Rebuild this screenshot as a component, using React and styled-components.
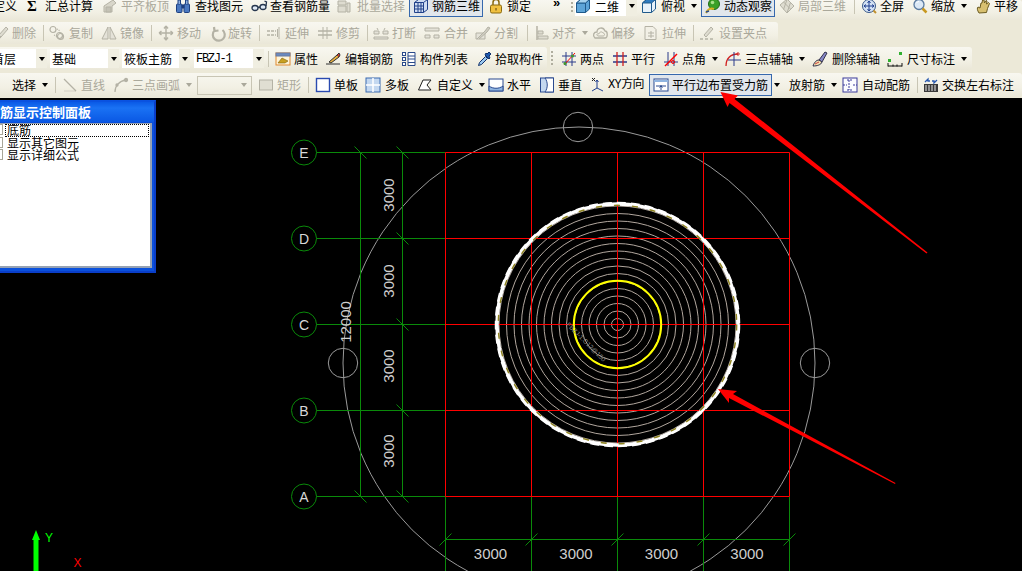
import React from 'react'
import styled, { createGlobalStyle } from 'styled-components'

const UI_FONT = '"Noto Sans CJK SC", "Liberation Sans", sans-serif'
const GREY = '#b4b2a5'
const GREEN = '#0a8a0a'
const RED = '#ff0000'

const shapes = {
  tile: <g stroke={GREY} fill="#d8d6ca"><path d="M2 14V8l9-6 3 3-4 3v6z" /><path d="M4 9h5v5H4z" fill="#c4c2b6" /></g>,
  bino: <g stroke="#1d3f80" fill="#4a78c0"><rect x="1.5" y="6" width="5.5" height="8.5" rx="1" /><rect x="9" y="6" width="5.5" height="8.5" rx="1" /><path d="M3 6V2h2.5v4M10.5 6V2H13v4" fill="#8fb0e0" /><path d="M7 7h2v3H7z" fill="#1d3f80" /></g>,
  glasses: <g stroke="#26364e" fill="#dfe9f5" strokeWidth="1.3"><ellipse cx="4" cy="10" rx="3" ry="2.5" /><ellipse cx="12" cy="9" rx="3" ry="2.5" /><path d="M7 9.5l2-.5M15 8l.5-4-2-1" fill="none" /></g>,
  batch: <g stroke={GREY} fill="#dedcd0"><path d="M2 3h8v4H2zM2 8h8v6H2z" /><path d="M11 5h3v9h-3z" /></g>,
  rebar3d: <g stroke="#20408a" fill="none"><path d="M1.5 4.5l4-3h9v10l-4 3h-9z" fill="#cfdcf2" /><path d="M1.5 4.5h9v10M10.5 4.5l4-3M5 5v9.5M8 5v9.5M1.5 8h9M1.5 11h9" /></g>,
  lock: <g stroke="#8a6a10"><path d="M5 7V4.5a3 3 0 016 0V7" fill="none" strokeWidth="1.5" /><rect x="2.5" y="7" width="11" height="8" rx="1.5" fill="#f0c040" /><path d="M8 10v2.5" stroke="#5a4008" /></g>,
  cube: <g stroke="#1f5a8c"><path d="M1.5 5l4-3.5h9V11l-4 3.5h-9z" fill="#5da4d8" /><path d="M1.5 5h9v9.5M10.5 5l4-3.5" fill="none" /><path d="M1.5 5l4-3.5h9l-4 3.5z" fill="#a6d2ee" /></g>,
  cubeTop: <g stroke="#1f5a8c"><path d="M1.5 5l4-3.5h9V11l-4 3.5h-9z" fill="#e8f2fa" /><path d="M1.5 5l4-3.5h9l-4 3.5z" fill="#2f7cc0" /><path d="M10.5 5v9.5" fill="none" /></g>,
  orbit: <g><circle cx="9" cy="6" r="5.5" fill="#3aa028" stroke="#1f6a18" /><circle cx="7.5" cy="4.5" r="1.8" fill="#a6e088" /><path d="M1 15c2-4 5-5 8-4" stroke="#d8b020" strokeWidth="2" fill="none" /><path d="M1 14l3-1" stroke="#2a4a90" strokeWidth="1.5" /></g>,
  tile3d: <g stroke={GREY} fill="#dedcd0"><path d="M1 7l7-6 7 7-7 7z" /><path d="M4.5 4l7 7M8 1.5l-3.5 10M11.5 4.5L8 15" fill="none" /></g>,
  full: <g><circle cx="8" cy="8" r="6.5" fill="#d4e2f4" stroke="#3a5a8a" /><path d="M8 3v10M3 8h10M8 3L6.5 5M8 3l1.5 2M8 13l-1.5-2M8 13l1.5-2M3 8l2-1.5M3 8l2 1.5M13 8l-2-1.5M13 8l-2 1.5" stroke="#1f3f90" fill="none" /><path d="M12.5 12.5l2.5 2.5" stroke="#c09030" strokeWidth="2" /></g>,
  zoom: <g><circle cx="7" cy="6.5" r="5" fill="#dbe8f6" stroke="#5a7aa0" strokeWidth="1.3" /><path d="M4.5 5A3 3 0 017 3.5" stroke="#fff" fill="none" /><path d="M10.5 10.5l4 4" stroke="#c89820" strokeWidth="2.5" /></g>,
  hand: <g stroke="#6a5a20" fill="#d8c070"><path d="M3 15c-2-3-2-5-1-6l2 1 1-5h1l.5-3H8l.5 3L10 2.5l1 .5-.5 3 2-1.5 1 1-2 5-1 4z" /></g>,
  del: <g stroke={GREY} fill="#dedcd0"><path d="M6 10l7-8 2 2-7 8z" /><path d="M1 15c1-3 3-5 5-5l2 2c-1 2-4 3-7 3z" fill="#c8c6ba" /></g>,
  copy: <g stroke={GREY} fill="none" strokeWidth="1.2"><circle cx="4" cy="4.5" r="3" /><circle cx="11.5" cy="11.5" r="3" /><circle cx="10.5" cy="10.5" r="3" /><path d="M8 4l3 2M5 10l2 1" strokeDasharray="1 1" /></g>,
  mirror: <g stroke={GREY} fill="#e4e2d8"><path d="M7 2v12H1zM9 2v12h6z" /></g>,
  move: <g stroke={GREY} fill="none" strokeWidth="1.4"><path d="M8 1v14M1 8h14M8 1L6 3.5M8 1l2 2.5M8 15l-2-2.5M8 15l2-2.5M1 8l2.5-2M1 8l2.5 2M15 8l-2.5-2M15 8l-2.5 2" /></g>,
  rotate: <path d="M12.5 5a6 6 0 11-8 .5M4 2l.5 4 4-.5" stroke={GREY} strokeWidth="2.2" fill="none" />,
  extend: <g stroke={GREY} fill="none"><path d="M1 6h9M1 10h9" strokeWidth="1.5" strokeDasharray="3 1" /><path d="M13 2v12M11.5 4v8" /></g>,
  trim: <g stroke={GREY} fill="none"><path d="M1 6h14M1 10h14" strokeWidth="1.3" /><path d="M6 2v12M10 2v12" /></g>,
  breakIt: <g stroke={GREY} fill="#e4e2d8"><path d="M1 6h5v3H1zM10 6h5v3h-5z" /><path d="M4 3l1 2M12 3l-1 2M1 12h14v2H1z" /></g>,
  merge: <g stroke={GREY} fill="#e4e2d8"><path d="M1 3h14v3H1zM1 10h5v3H1zM10 10h5v3h-5z" /></g>,
  split: <g stroke={GREY} fill="#e4e2d8"><path d="M1 8h9v6H1z" /><path d="M2 14l8-8 3-4 2 1-3 4-8 7" fill="#d0cec2" /></g>,
  align: <g stroke={GREY} fill="#dedcd0"><path d="M3 1v14" strokeWidth="1.5" /><path d="M4 6h5v3H4zM4 11h10v3H4z" /></g>,
  offset: <g stroke={GREY} fill="none"><path d="M3 13c-3-3-1-6 2-6 0-4 6-6 8-1 3 0 3 7 0 7z" strokeWidth="1.3" /><path d="M6 11c-2-1-1-3 1-2 0-2 3-3 4-1 2 0 2 3 0 3z" /></g>,
  stretch: <g stroke={GREY} fill="#f2f0e6"><path d="M2 1.5h8l3 3v10H2z" /><path d="M5 8h6M5 11h6M8 6v7" fill="none" /></g>,
  grip: <g fill="none" stroke={GREY}><path d="M5 10l7-8 2 2-7 8z" fill="#dedcd0" /><path d="M1 14h3M6 14h3M11 14h3" strokeWidth="1.5" /></g>,
  attr: <g><rect x="1" y="2" width="14" height="12" fill="#fff4d8" stroke="#e08a30" /><rect x="1" y="2" width="14" height="3" fill="#6a8ac0" stroke="#6a7aa0" /><path d="M3 12l4-5 6 3-3 2z" fill="#c8a020" stroke="#806010" strokeWidth=".6" /></g>,
  pencil: <g stroke="#303030" fill="none"><path d="M1 13h14" /><path d="M4 11l8-7 2 2-8 6z" fill="#e8b040" /><path d="M12 4l2-2 1 2-1 2" fill="#d84030" /></g>,
  list: <g stroke="#2a4a8a" fill="#fff"><rect x="1.5" y="1.5" width="3" height="3" /><rect x="1.5" y="6.5" width="3" height="3" /><rect x="1.5" y="11.5" width="3" height="3" /><path d="M7 1.5h7v13H7zM7 5h7M7 8h7M7 11.5h7" /></g>,
  dropper: <g stroke="#10306a"><path d="M1.5 14.5l1-3 6-6 2 2-6 6z" fill="#9ac8f0" /><path d="M8 4l4 4 1-1-1-2 2-2-2-2-2 2-1-1z" fill="#1f5ab0" /></g>,
  twoPoint: <g fill="none"><path d="M1 5h14M1 11h14M5 1v14M11 1v14" stroke="#2a3a8a" /><path d="M3 14L14 2" stroke={RED} /><circle cx="4" cy="12.5" r="1.5" fill="#3a9a30" /><circle cx="11.5" cy="5" r="1.5" fill="#3a9a30" /></g>,
  parallel: <g fill="none"><path d="M1 5h14M1 11h14" stroke="#2a3a8a" strokeWidth="1.3" /><path d="M5 1v14M11 1v14" stroke="#d02020" strokeWidth="1.3" /></g>,
  angle: <g fill="none"><path d="M1 11h14M5 1v14" stroke="#2a3a8a" /><path d="M11 1v14" stroke="#2a3a8a" /><path d="M2 15L14 3" stroke={RED} strokeWidth="1.4" /><circle cx="10" cy="11" r="1.5" stroke={RED} /></g>,
  arc3: <g fill="none"><path d="M1 15C1 7 6 3 13 3" stroke="#d02020" strokeWidth="1.3" /><path d="M9 1v14M3 9h13" stroke="#2a3a8a" /><circle cx="13" cy="3" r="1.2" stroke="#d02020" /></g>,
  brush: <g stroke="#30304a"><path d="M7 9l6-8 2 1-5 9z" fill="#8888c8" /><path d="M1 15c1-3 3-6 6-6l3 2c-1 3-5 4-9 4z" fill="#f0e0b0" /><path d="M3 13l4-2" stroke="#d04040" /></g>,
  dim: <g fill="none" stroke="#101010"><path d="M1 15h14M1 12v3.5M15 12v3.500M6 13.5v2M10 13.5v2" /><rect x="1" y="8" width="3" height="3" fill="#30b030" stroke="none" /><rect x="12" y="1" width="3" height="3" fill="#30b030" stroke="none" /></g>,
  pick: <g stroke="#3a5a9a" fill="#a0b8e0"><path d="M-6 8h9l-1 6h-7z" /></g>,
  line: <g stroke={GREY} strokeWidth="1.3" fill="none"><path d="M2 2l12 12" /><path d="M2 14h12" strokeWidth=".5" /></g>,
  arc: <g stroke={GREY} strokeWidth="1.3" fill="none"><path d="M2 15c0-6 4-11 11-12" /><circle cx="13" cy="3" r="1.5" fill={GREY} /><circle cx="4" cy="8" r="1" fill={GREY} /></g>,
  rect: <rect x="1.5" y="3" width="13" height="10" fill="#e0ded2" stroke={GREY} />,
  single: <rect x="1.5" y="1.5" width="13" height="13" fill="#fff" stroke="#2a4ab0" strokeWidth="1.4" />,
  multi: <g fill="#c4d8f0" stroke="#3a6ab0"><rect x="1" y="1" width="14" height="14" /><path d="M8 1v14M1 8h14" stroke="#fff" strokeWidth="1.5" /></g>,
  custom: <path d="M1.5 13L6 3h8l-4 5 4 5z" fill="#fff" stroke="#202020" />,
  horiz: <g stroke="#2a4a90"><rect x="1" y="2" width="14" height="12" fill="#fff" /><path d="M1 9c4 3 10 3 14 0v5H1z" fill="#8fb4e0" /></g>,
  vert: <g stroke="#2a4a90"><rect x="1.5" y="1" width="13" height="14" fill="#c4d8f0" /><path d="M6 1c3 4 3 10 0 14h8.500V1z" fill="#fff" /></g>,
  xy: <g fill="none" stroke="#1f3f90"><path d="M7 3v8l6 3M7 11l-5 3M7 3L5.5 5M7 3l1.500 2" /><path d="M2 1l3 3M5 1L2 4" stroke="#202020" /></g>,
  edge: <g stroke="#2a4a90"><rect x="1" y="2" width="14" height="12" fill="#fff" /><path d="M1 4h14" stroke="#8fb4e0" strokeWidth="2" /><path d="M3 9h10M8 8v5M6.5 10.5L8 9l1.5 1.5" fill="none" /></g>,
  auto: <g fill="none"><rect x="1" y="1" width="14" height="14" stroke="#3a3a9a" fill="#fbfbff" /><path d="M5 3h6M5 13h6M7 3v10M1 8h4M11 8h4" stroke="#3a3a9a" strokeDasharray="2 1" /></g>,
  swap: <g><rect x="1" y="7" width="14" height="8" fill="#3a3a3a" /><path d="M3 8v6M6 8v6M9 8v6M12 8v6" stroke="#e8e8e8" /><path d="M2 5l3-3v2h2M14 3l-3 3V4H9" stroke="#2a5ab0" fill="none" strokeWidth="1.3" /></g>
}

const Glyph = ({ name }) => (
  <GlyphBox viewBox="0 0 16 16">{shapes[name]}</GlyphBox>
)

const row1 = [
  { t: '定义', w: 34 },
  { sigma: true, t: '汇总计算', w: 75 },
  { i: 'tile', t: '平齐板顶', w: 73, off: true },
  { i: 'bino', t: '查找图元', w: 76, g: 4 },
  { i: 'glasses', t: '查看钢筋量', w: 85 },
  { i: 'batch', t: '批量选择', w: 73, off: true, g: 5 },
  { i: 'rebar3d', t: '钢筋三维', w: 74, press: true },
  { i: 'lock', t: '锁定', w: 65, ml: 5 },
  { more: true, w: 17 },
  { grip: true, w: 5 },
  { combo: true, i: 'cube', t: '二维', w: 62 },
  { i: 'cubeTop', t: '俯视', w: 60, drop: true, ml: 4, g: 4 },
  { i: 'orbit', t: '动态观察', w: 74, press: true },
  { i: 'tile3d', t: '局部三维', w: 75, ml: 4, off: true },
  { sep: true, w: 7 },
  { i: 'full', t: '全屏', w: 51 },
  { i: 'zoom', t: '缩放', w: 64, drop: true },
  { i: 'hand', t: '平移', w: 46, g: 2 }
]

const row2 = [
  { i: 'del', t: '删除', w: 50 },
  { sep: true, w: 6 },
  { i: 'copy', t: '复制', w: 52, g: 4 },
  { i: 'mirror', t: '镜像', w: 50, g: 3 },
  { sep: true, w: 7 },
  { i: 'move', t: '移动', w: 52 },
  { i: 'rotate', t: '旋转', w: 49, g: 2 },
  { sep: true, w: 7 },
  { i: 'extend', t: '延伸', w: 51 },
  { i: 'trim', t: '修剪', w: 50 },
  { sep: true, w: 6 },
  { i: 'breakIt', t: '打断', w: 51 },
  { i: 'merge', t: '合并', w: 51, g: 4 },
  { i: 'split', t: '分割', w: 52 },
  { sep: true, w: 7 },
  { i: 'align', t: '对齐', w: 58, g: 2, drop: true },
  { i: 'offset', t: '偏移', w: 51 },
  { i: 'stretch', t: '拉伸', w: 50 },
  { sep: true, w: 6 },
  { i: 'grip', t: '设置夹点', w: 73, g: 4 }
]

const row3a = [
  { combo: true, t: '首层', w: 57 },
  { combo: true, t: '基础', w: 69, ml: 3 },
  { combo: true, t: '筱板主筋', w: 68, ml: 3 },
  { combo: true, t: 'FBZJ-1', w: 70, ml: 4, mono: true },
  { sep: true, w: 7, ml: 4 },
  { i: 'attr', t: '属性', w: 50 },
  { i: 'pencil', t: '编辑钢筋', w: 76, g: 4 },
  { i: 'list', t: '构件列表', w: 76, g: 3 },
  { i: 'dropper', t: '拾取构件', w: 70, g: 2 }
]

const row3b = [
  { grip: true, w: 11 },
  { i: 'twoPoint', t: '两点', w: 51 },
  { i: 'parallel', t: '平行', w: 51 },
  { i: 'angle', t: '点角', w: 62, drop: true },
  { i: 'arc3', t: '三点辅轴', w: 87, g: 4, drop: true },
  { i: 'brush', t: '删除辅轴', w: 75, g: 4 },
  { i: 'dim', t: '尺寸标注', w: 85, g: 4, drop: true }
]

const row4 = [
  { i: 'pick', t: '选择', w: 62, drop: true },
  { sep: true, w: 7 },
  { i: 'line', t: '直线', w: 51, off: true },
  { i: 'arc', t: '三点画弧', w: 84, off: true, drop: true },
  { blank: true, w: 55 },
  { i: 'rect', t: '矩形', w: 50, off: true, ml: 6 },
  { sep: true, w: 7 },
  { i: 'single', t: '单板', w: 50 },
  { i: 'multi', t: '多板', w: 52, g: 4 },
  { i: 'custom', t: '自定义', w: 71, g: 4, drop: true },
  { i: 'horiz', t: '水平', w: 51 },
  { i: 'vert', t: '垂直', w: 51 },
  { i: 'xy', t: 'XY方向', w: 59, g: 2, mono: true },
  { i: 'edge', t: '平行边布置受力筋', w: 123, press: true },
  { arrowOnly: true, w: 17 },
  { t: '放射筋', w: 53, drop: true },
  { i: 'auto', t: '自动配筋', w: 75, g: 4 },
  { sep: true, w: 6 },
  { i: 'swap', t: '交换左右标注', w: 95, g: 3 }
]

const renderTool = (tool, key) => {
  if (tool.sep) return <Sep key={key} $w={tool.w} $ml={tool.ml} />
  if (tool.grip) return <Grip key={key} $w={tool.w} />
  if (tool.more) return <More key={key} $w={tool.w}>»</More>
  if (tool.arrowOnly) return <Tool key={key} $w={tool.w}><Drop $off={false} $ml={2} /></Tool>
  if (tool.blank) return <BlankCombo key={key} $w={tool.w}><Drop $off $ml={0} /></BlankCombo>
  if (tool.combo) {
    return (
      <Combo key={key} $w={tool.w} $ml={tool.ml}>
        {tool.i && <Glyph name={tool.i} />}
        <ComboText $mono={tool.mono} $icon={!!tool.i}>{tool.t}</ComboText>
        <ComboBtn><Drop $off={false} $ml={0} /></ComboBtn>
      </Combo>
    )
  }
  return (
    <Tool key={key} $w={tool.w} $ml={tool.ml} $press={tool.press}>
      {tool.sigma && <Sigma>Σ</Sigma>}
      {tool.i && <Glyph name={tool.i} />}
      <Label $off={tool.off} $g={tool.i ? tool.g ?? 3 : 0} $mono={tool.mono}>{tool.t}</Label>
      {tool.drop && <Drop $off={tool.off} $ml={6} />}
    </Tool>
  )
}

const disabled = (list) => list.map((tool) => ({ ...tool, off: true }))

const ticksV = [[360.5, 152.5], [402.5, 152.5], [402.5, 238.5], [402.5, 324.5], [402.5, 410.5], [360.5, 496.5], [402.5, 496.5]]
const ticksH = [445.5, 531.5, 617.5, 703.5, 789.5]
const axes = [['E', 152.5], ['D', 238.5], ['C', 324.5], ['B', 410.5], ['A', 496.5]]
const rings = Array.from({ length: 16 }, (_, k) => 6 + k * 7.5)

const Drawing = () => (
  <Sheet viewBox="0 98 1022 473">
    <g fill="none" stroke="#9a9a9a">
      <circle cx="579" cy="363" r="236" />
      <circle cx="578" cy="127" r="14.7" />
      <circle cx="343" cy="363" r="14.7" />
      <circle cx="815" cy="363" r="14.7" />
    </g>

    <g fill="none" stroke={GREEN}>
      {axes.map(([name, y]) => (
        <g key={name}>
          <circle cx="304" cy={y} r="12.5" />
          <path d={`M316.5 ${y}H445.5`} />
        </g>
      ))}
      <path d="M360.5 152.5V496.5M402.5 152.5V496.5" />
      <path d="M445.5 539.5H789.5" />
      {ticksH.map((x) => <path key={x} d={`M${x} 496.5V571M${x - 6} 545.5L${x + 6} 533.5`} />)}
      {ticksV.map(([x, y]) => <path key={`${x}-${y}`} d={`M${x - 6} ${y - 6}L${x + 6} ${y + 6}`} />)}
    </g>

    <circle cx="617.5" cy="324.5" r="121" fill="#000" stroke="none" />
    <g fill="none" stroke="#b2a79e">
      {rings.map((r) => <circle key={r} cx="617.5" cy="324.5" r={r} />)}
    </g>

    <g fill="none" stroke={RED}>
      {axes.map(([name, y]) => <path key={name} d={`M445.5 ${y}H789.5`} />)}
      {ticksH.map((x) => <path key={x} d={`M${x} 152.5V496.5`} />)}
    </g>

    <circle cx="617.5" cy="324.5" r="43.7" fill="none" stroke="#ffff00" strokeWidth="2" />
    <circle cx="617.5" cy="324.5" r="120.5" fill="none" stroke="#ffffff" strokeWidth="3.5" />
    <circle cx="617.5" cy="324.5" r="122" fill="none" stroke="#ffffff" strokeWidth="1.5" strokeDasharray="9 5" />
    <circle cx="617.5" cy="324.5" r="119.2" fill="none" stroke="#8f8420" strokeWidth="1.4" strokeDasharray="6 12" />
    <BarNote x="566" y="325" transform="rotate(45 566 325)">FBZJ-1:C12@150</BarNote>

    {axes.map(([name, y]) => <AxisName key={name} x="304" y={y + 5}>{name}</AxisName>)}

    {[195, 281, 366, 451].map((y) => (
      <Dim key={y} x="394" y={y} transform={`rotate(-90 394 ${y})`}>3000</Dim>
    ))}
    <Dim x="351" y="322" transform="rotate(-90 351 322)">12000</Dim>
    {[490.5, 576, 661.5, 747].map((x) => <Dim key={x} x={x} y="559">3000</Dim>)}

    <path d="M36 530l4 10h-1.5v31h-5v-31H32z" fill="#00ff00" />
    <AxisMark x="45" y="542" fill="#00ff00">Y</AxisMark>
    <AxisMark x="73.5" y="567" fill={RED}>X</AxisMark>
  </Sheet>
)

const App = () => (
  <Page>
    <GlobalStyle />
    <Toolbars>
      <Row $h={20} $pb={8} $lead={-7}>
        <Band $grow>{row1.map(renderTool)}</Band>
      </Row>
      <Row $h={22} $mt={2} $lead={-7}>
        <Band $pr={6}>{disabled(row2).map(renderTool)}</Band>
      </Row>
      <Row $h={23} $mt={3} $lead={-10}>
        <Band $pr={0}>{row3a.map(renderTool)}</Band>
        <Band $pr={0} $ml={3}>{row3b.map(renderTool)}</Band>
      </Row>
      <Row $h={24} $mt={3} $lead={-7}>
        <Band $grow>{row4.map(renderTool)}</Band>
      </Row>
    </Toolbars>

    <Canvas>
      <Drawing />
      <Panel>
        <PanelTitle>钢筋显示控制面板</PanelTitle>
        <PanelBody>
          <PanelRow $focus><Check />底筋</PanelRow>
          <PanelRow><Check />显示其它图元</PanelRow>
          <PanelRow><Check />显示详细公式</PanelRow>
        </PanelBody>
      </Panel>
    </Canvas>

    <Arrows viewBox="0 0 1022 571">
      <path d="M720.5 92L738 95.5 734.5 99 927.5 252.5 926.5 253.5 729.5 103 727.5 107z" fill={RED} />
      <path d="M718 389L737 391 733 394 895.5 483 895 484 729 398 729 403z" fill={RED} />
    </Arrows>
  </Page>
)

const GlobalStyle = createGlobalStyle`
  html, body {
    margin: 0;
    padding: 0;
    background: #000;
  }
`

const Page = styled.div`
  position: relative;
  width: 1022px;
  height: 571px;
  overflow: hidden;
  display: flex;
  flex-direction: column;
  font-family: ${UI_FONT};
  font-size: 12px;
`

const Toolbars = styled.div`
  height: 98px;
  flex: none;
  background: #ece9d8;
  overflow: hidden;
`

const Row = styled.div`
  display: flex;
  height: ${(p) => p.$h}px;
  margin-top: ${(p) => p.$mt || 0}px;
  margin-left: ${(p) => p.$lead}px;
  & > div {
    padding-bottom: ${(p) => p.$pb || 0}px;
  }
`

const Band = styled.div`
  display: flex;
  align-items: center;
  flex: ${(p) => (p.$grow ? '1' : 'none')};
  margin-left: ${(p) => p.$ml || 0}px;
  padding-right: ${(p) => p.$pr || 0}px;
  border-radius: 0 3px 3px 0;
  background: linear-gradient(#f8f7f0, #f2f0e4 60%, #eae7d8);
`

const Tool = styled.div`
  display: flex;
  align-items: center;
  flex: none;
  box-sizing: border-box;
  width: ${(p) => p.$w}px;
  height: ${(p) => (p.$press ? 22 : 18)}px;
  margin-left: ${(p) => p.$ml || 0}px;
  padding-left: ${(p) => (p.$press ? 3 : 0)}px;
  border: ${(p) => (p.$press ? '1px solid #3668ad' : 'none')};
  background: ${(p) => (p.$press ? '#e1e6ec' : 'transparent')};
  white-space: nowrap;
`

const GlyphBox = styled.svg`
  width: 16px;
  height: 16px;
  flex: none;
  overflow: visible;
`

const Sigma = styled.span`
  width: 14px;
  margin-right: 4px;
  font-family: "Liberation Serif", serif;
  font-size: 15px;
  font-weight: bold;
  line-height: 16px;
`

const Label = styled.span`
  margin-left: ${(p) => p.$g}px;
  color: ${(p) => (p.$off ? '#aaa89b' : '#000')};
  font-family: ${(p) => (p.$mono ? `"Liberation Mono", ${UI_FONT}` : UI_FONT)};
  line-height: 16px;
  ${(p) => p.$mono && 'letter-spacing: -0.6px;'}
`

const Drop = styled.span`
  width: 0;
  height: 0;
  flex: none;
  margin-left: ${(p) => p.$ml}px;
  border-left: 3.5px solid transparent;
  border-right: 3.5px solid transparent;
  border-top: 4px solid ${(p) => (p.$off ? '#aaa89b' : '#000')};
`

const Sep = styled.div`
  flex: none;
  box-sizing: border-box;
  width: ${(p) => p.$w}px;
  height: 16px;
  margin-left: ${(p) => p.$ml || 0}px;
  border-left: 1px solid #c8c5b4;
`

const Grip = styled.div`
  flex: none;
  box-sizing: border-box;
  width: ${(p) => p.$w}px;
  height: 16px;
  padding-left: 3px;
  background: repeating-linear-gradient(#b0ae9f 0 2px, transparent 2px 4px) 1px 0 / 2px 100% no-repeat;
`

const More = styled.div`
  flex: none;
  width: ${(p) => p.$w}px;
  font-family: "Liberation Sans", sans-serif;
  font-size: 13px;
  font-weight: bold;
  line-height: 12px;
  margin-top: -6px;
`

const Combo = styled.div`
  display: flex;
  align-items: center;
  flex: none;
  width: ${(p) => p.$w}px;
  height: 19px;
  margin-left: ${(p) => p.$ml || 0}px;
  background: #fff;
`

const ComboText = styled.span`
  flex: 1;
  margin-left: ${(p) => (p.$icon ? 4 : 2)}px;
  font-family: ${(p) => (p.$mono ? `"Liberation Mono", ${UI_FONT}` : UI_FONT)};
  white-space: nowrap;
  ${(p) => p.$mono && 'letter-spacing: -1.3px;'}
`

const ComboBtn = styled.div`
  display: flex;
  align-items: center;
  justify-content: center;
  flex: none;
  width: 11px;
  height: 100%;
  background: #f0eee1;
`

const BlankCombo = styled.div`
  display: flex;
  align-items: center;
  justify-content: flex-end;
  flex: none;
  box-sizing: border-box;
  width: ${(p) => p.$w}px;
  height: 19px;
  padding-right: 4px;
  border: 1px solid #c8c5b4;
`

const Canvas = styled.div`
  position: relative;
  flex: 1;
  background: #000;
  overflow: hidden;
`

const Sheet = styled.svg`
  display: block;
  width: 1022px;
  height: 473px;
`

const AxisName = styled.text`
  fill: #d8d8d8;
  font-family: "Liberation Sans", sans-serif;
  font-size: 14px;
  text-anchor: middle;
`

const Dim = styled.text`
  fill: #cfcfcf;
  font-family: "Liberation Sans", sans-serif;
  font-size: 15px;
  text-anchor: middle;
`

const BarNote = styled.text`
  fill: #8a8a8a;
  font-family: "Liberation Sans", sans-serif;
  font-size: 6.5px;
`

const AxisMark = styled.text`
  font-family: "Liberation Sans", sans-serif;
  font-size: 12px;
`

const Panel = styled.div`
  position: absolute;
  top: 2px;
  left: -20px;
  width: 176px;
  height: 173px;
  box-sizing: border-box;
  display: flex;
  flex-direction: column;
  border: 2px solid #0a3ec8;
  border-top-color: #0a52e0;
  background: #0a50dc;
`

const PanelTitle = styled.div`
  height: 20px;
  flex: none;
  padding-left: 5px;
  background: linear-gradient(#0a5ae6, #1a72f4 30%, #0a58e4);
  color: #fff;
  font-size: 13px;
  font-weight: bold;
  line-height: 20px;
  white-space: nowrap;
`

const PanelBody = styled.div`
  flex: 1;
  margin: 1px 2px 3px;
  border: 1px solid #96a2b4;
  border-width: 1px 2px 2px 1px;
  background: #fff;
`

const PanelRow = styled.div`
  display: flex;
  align-items: center;
  box-sizing: border-box;
  position: relative;
  height: 12.5px;
  margin: 0 1px 0 20px;
  padding-left: 2px;
  outline: ${(p) => (p.$focus ? '1px dotted #000' : 'none')};
  outline-offset: -1px;
  line-height: 12px;
  white-space: nowrap;
`

const Check = styled.span`
  position: absolute;
  left: -20px;
  top: 0;
  width: 18px;
  height: 11px;
  box-sizing: border-box;
  border: 1px solid #a8a698;
`

const Arrows = styled.svg`
  position: absolute;
  top: 0;
  left: 0;
  width: 1022px;
  height: 571px;
  pointer-events: none;
`

export default App
